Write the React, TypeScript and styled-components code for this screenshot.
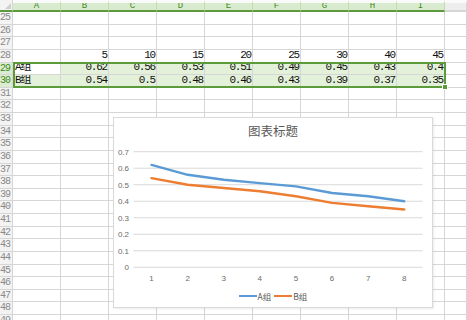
import React from "react";
import styled, { createGlobalStyle } from "styled-components";

const Global = createGlobalStyle`
  html, body { margin: 0; padding: 0; background: #fff; }
  body { width: 467px; height: 320px; overflow: hidden; }
`;

const GRID = "#d6d6d6";
const GREEN = "#5b9b3c";

const Sheet = styled.div`
  position: relative;
  display: grid;
  grid-template-columns: 13px repeat(9, 48px) 1fr;
  grid-template-rows: 12px repeat(25, 12.625px);
  height: 320px;
  overflow: hidden;
  font-family: "Liberation Mono", "Noto Sans CJK SC", monospace;
`;

const Corner = styled.div`
  background: #f3f3f3;
  border-right: 1px solid ${GRID};
  border-bottom: 2px solid ${GREEN};
  box-sizing: border-box;
  position: relative;
  &::after {
    content: "";
    position: absolute;
    right: 1px;
    bottom: 1px;
    border-left: 6px solid transparent;
    border-bottom: 6px solid #cfcfcf;
  }
`;

const ColHead = styled.div<{ $on: boolean }>`
  box-sizing: border-box;
  background: ${(p) => (p.$on ? "#d9ebcf" : "#ededed")};
  border-right: 1px solid ${(p) => (p.$on ? "#c3dcb4" : GRID)};
  border-bottom: 2px solid ${(p) => (p.$on ? GREEN : GRID)};
  border-top: 3px solid #fafafa;
  color: #3f8a23;
  font-size: 9px;
  line-height: 7px;
  text-align: center;
  overflow: hidden;
`;

const RowHead = styled.div<{ $on: boolean }>`
  box-sizing: border-box;
  background: ${(p) => (p.$on ? "#dcecd2" : "#f3f3f3")};
  border-right: 1px solid ${GRID};
  border-bottom: 1px solid ${GRID};
  color: ${(p) => (p.$on ? "#3f8a23" : "#8a8a8a")};
  font-size: 10px;
  letter-spacing: -1px;
  line-height: 11px;
  overflow: hidden;
  white-space: nowrap;
`;

const Cell = styled.div<{ $sel: boolean; $active: boolean; $left: boolean }>`
  box-sizing: border-box;
  background: ${(p) => (p.$active ? "#fff" : p.$sel ? "#e3f1da" : "#fff")};
  border-right: 1px solid ${GRID};
  border-bottom: 1px solid ${GRID};
  display: flex;
  align-items: flex-end;
  justify-content: ${(p) => (p.$left ? "flex-start" : "flex-end")};
  padding: 0 1px 1px 2px;
  font-size: 11px;
  letter-spacing: -1.2px;
  line-height: 11px;
  color: #111;
  white-space: nowrap;
  overflow: hidden;
`;

const Selection = styled.div`
  position: absolute;
  left: 13px;
  top: 62px;
  width: 433px;
  height: 26px;
  border: 2px solid ${GREEN};
  box-sizing: border-box;
  pointer-events: none;
  &::after {
    content: "";
    position: absolute;
    right: -4px;
    bottom: -4px;
    width: 4px;
    height: 4px;
    background: ${GREEN};
    border: 1px solid #fff;
  }
`;

const ChartBox = styled.div`
  position: absolute;
  left: 113px;
  top: 117px;
  width: 320px;
  height: 191px;
  box-sizing: border-box;
  background: #fff;
  border: 1px solid #d9d9d9;
  box-shadow: 1px 1px 2px rgba(0, 0, 0, 0.08);
  display: flex;
  flex-direction: column;
  font-family: "Liberation Sans", "Noto Sans CJK SC", sans-serif;
`;

const ChartTitle = styled.div`
  height: 27px;
  padding-top: 5px;
  box-sizing: border-box;
  text-align: center;
  font-family: "Noto Sans CJK SC", sans-serif;
  font-size: 12.5px;
  line-height: 16px;
  color: #595959;
`;

const Plot = styled.svg`
  display: block;
  width: 318px;
  height: 140px;
`;

const Legend = styled.div`
  display: flex;
  justify-content: center;
  align-items: center;
  gap: 3px;
  height: 22px;
  font-family: "Noto Sans CJK SC", sans-serif;
  font-size: 8.5px;
  color: #595959;
`;

const LegendItem = styled.div`
  display: flex;
  align-items: center;
  gap: 1px;
`;

const Swatch = styled.span<{ $c: string }>`
  display: inline-block;
  width: 18px;
  height: 2.5px;
  background: ${(p) => p.$c};
`;

const cols = ["A", "B", "C", "D", "E", "F", "G", "H", "I"];
const xs = [5, 10, 15, 20, 25, 30, 40, 45];
const a = [0.62, 0.56, 0.53, 0.51, 0.49, 0.45, 0.43, 0.4];
const b = [0.54, 0.5, 0.48, 0.46, 0.43, 0.39, 0.37, 0.35];

const rowData = (r: number): string[] => {
  if (r === 28) return ["", ...xs.map(String)];
  if (r === 29) return ["A组", ...a.map(String)];
  if (r === 30) return ["B组", ...b.map(String)];
  return Array(9).fill("");
};

const Y0 = 122.3;
const YS = 165.14;
const X0 = 19.5;
const XW = 36.1;
const px = (i: number) => X0 + XW / 2 + i * XW;
const py = (v: number) => Y0 - v * YS;

function Chart() {
  const ticks = [0.7, 0.6, 0.5, 0.4, 0.3, 0.2, 0.1, 0];
  const pts = (d: number[]) => d.map((v, i) => `${px(i).toFixed(1)},${py(v).toFixed(1)}`).join(" ");
  return (
    <ChartBox>
      <ChartTitle>图表标题</ChartTitle>
      <Plot viewBox="0 0 318 140">
        {ticks.map((t) => (
          <g key={t}>
            <line x1={X0} x2={308.5} y1={py(t)} y2={py(t)} stroke="#d9d9d9" strokeWidth={1} />
            <text x={15} y={py(t) + 2.8} textAnchor="end" fontSize="8" fill="#6b6b6b">
              {String(t)}
            </text>
          </g>
        ))}
        {xs.map((_, i) => (
          <text key={i} x={px(i)} y={135.5} textAnchor="middle" fontSize="8" fill="#6b6b6b">
            {i + 1}
          </text>
        ))}
        <polyline points={pts(a)} fill="none" stroke="#5b9bd5" strokeWidth={2.4} strokeLinejoin="round" strokeLinecap="round" />
        <polyline points={pts(b)} fill="none" stroke="#ed7d31" strokeWidth={2.4} strokeLinejoin="round" strokeLinecap="round" />
      </Plot>
      <Legend>
        <LegendItem>
          <Swatch $c="#5b9bd5" />
          <span>A组</span>
        </LegendItem>
        <LegendItem>
          <Swatch $c="#ed7d31" />
          <span>B组</span>
        </LegendItem>
      </Legend>
    </ChartBox>
  );
}

export default function App() {
  const rows = Array.from({ length: 25 }, (_, i) => 25 + i);
  return (
    <>
      <Global />
      <Sheet>
        <Corner />
        {cols.map((c) => (
          <ColHead key={c} $on>
            {c}
          </ColHead>
        ))}
        <ColHead $on={false} />
        {rows.map((r) => {
          const data = rowData(r);
          const sel = r === 29 || r === 30;
          return (
            <React.Fragment key={r}>
              <RowHead $on={sel}>{r}</RowHead>
              {data.map((v, ci) => (
                <Cell key={ci} $sel={sel} $active={r === 29 && ci === 0} $left={ci === 0}>
                  {v}
                </Cell>
              ))}
              <Cell $sel={false} $active={false} $left />
            </React.Fragment>
          );
        })}
        <Selection />
        <Chart />
      </Sheet>
    </>
  );
}
